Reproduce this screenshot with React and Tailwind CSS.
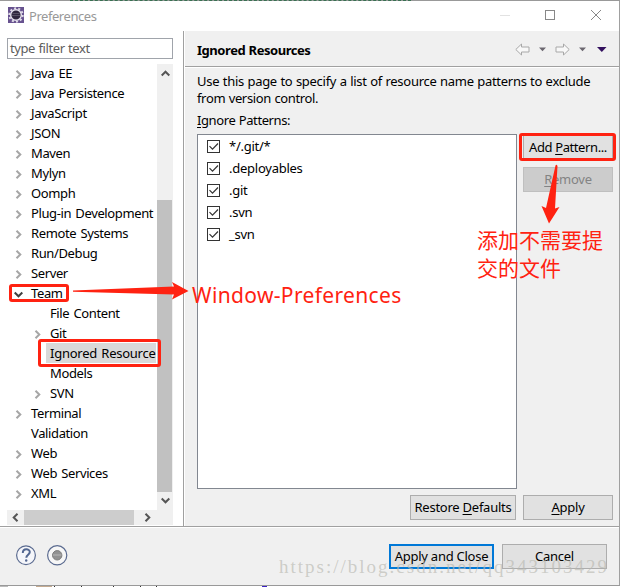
import React from "react";

const treeItems = [
  { label: "Java EE", arrow: true },
  { label: "Java Persistence", arrow: true },
  { label: "JavaScript", arrow: true },
  { label: "JSON", arrow: true },
  { label: "Maven", arrow: true },
  { label: "Mylyn", arrow: true },
  { label: "Oomph", arrow: true },
  { label: "Plug-in Development", arrow: true },
  { label: "Remote Systems", arrow: true },
  { label: "Run/Debug", arrow: true },
  { label: "Server", arrow: true },
  { label: "Team", arrow: true, open: true },
  { label: "File Content", child: true },
  { label: "Git", arrow: true, child: true },
  { label: "Ignored Resource", child: true, selected: true },
  { label: "Models", child: true },
  { label: "SVN", arrow: true, child: true },
  { label: "Terminal", arrow: true },
  { label: "Validation" },
  { label: "Web", arrow: true },
  { label: "Web Services", arrow: true },
  { label: "XML", arrow: true },
];

const patterns = ["*/.git/*", ".deployables", ".git", ".svn", "_svn"];

const rotations = {
  right: "",
  down: "rotate-90",
  left: "rotate-180",
  up: "-rotate-90",
};

function Chevron({ dir = "right", color = "#a6a6a6" }) {
  return (
    <svg width="9" height="9" viewBox="0 0 9 9" className={rotations[dir]}>
      <path d="M2.5 0.7L6.3 4.5L2.5 8.3" fill="none" stroke={color} strokeWidth="2" />
    </svg>
  );
}

function TreeRow({ item }) {
  return (
    <div className={`flex h-5 items-center ${item.child ? "pl-[26px]" : "pl-[7px]"}`}>
      <div className="flex w-[17px] shrink-0 items-center pt-0.5">
        {item.arrow && (
          <Chevron dir={item.open ? "down" : "right"} color={item.open ? "#404040" : "#a6a6a6"} />
        )}
      </div>
      <div
        className={`h-5 leading-5 whitespace-nowrap ${
          item.selected ? "-ml-1 w-[110px] bg-[#d9d9d9] pl-1 tracking-[-0.25px]" : ""
        }`}
      >
        {item.label}
      </div>
    </div>
  );
}

function Button({ className, children }) {
  return (
    <button className={`flex h-[25px] shrink-0 items-center justify-center whitespace-nowrap ${className}`}>
      <span>{children}</span>
    </button>
  );
}

function Key({ children }) {
  return <span className="underline decoration-1 underline-offset-2">{children}</span>;
}

function EclipseIcon() {
  return (
    <svg width="16" height="16" viewBox="0 0 16 16">
      <rect width="16" height="16" fill="#67528f" />
      <circle cx="8" cy="8" r="6.7" fill="none" stroke="#ded9e6" strokeWidth="2" strokeDasharray="2.1 2.1" />
      <circle cx="8" cy="8" r="5.3" fill="#30263e" stroke="#e6e2ed" strokeWidth="1.4" />
      <path d="M4.5 6.5h7M4 8.5h8" stroke="#575064" />
    </svg>
  );
}

function TitleBar() {
  return (
    <div className="flex h-[30px] shrink-0 bg-white pl-2">
      <div className="pt-1.5">
        <EclipseIcon />
      </div>
      <span className="ml-[5px] grow pt-[5px] leading-5 tracking-[-0.45px] text-[#999]">Preferences</span>
      <svg width="106" height="30" viewBox="0 0 106 30" fill="none" className="mr-[13px]">
        <path d="M0 14.5h10" stroke="#e2e2e2" />
        <rect x="45.5" y="9.5" width="9" height="9" stroke="#888" />
        <path d="M91 9l10 10M101 9l-10 10" stroke="#888" />
      </svg>
    </div>
  );
}

function Sidebar() {
  return (
    <div className="flex w-[183px] shrink-0 flex-col bg-white pt-[7px] pl-[7px]">
      <div className="h-[21px] w-[166px] border border-[#a0a4ab] pl-0.5 leading-[19px] tracking-[-0.4px] text-[#5c5c5c]">
        type filter text
      </div>
      <div className="mt-1 flex h-[447px] w-[166px]">
        <div className="w-[150px] tracking-[-0.38px] [word-spacing:1.2px]">
          {treeItems.map((item) => (
            <TreeRow key={item.label} item={item} />
          ))}
        </div>
        <div className="mt-px flex w-4 flex-col items-center bg-[#f0f0f0]">
          <div className="flex h-[136px] items-start pt-[5px]">
            <Chevron dir="up" color="#555" />
          </div>
          <div className="mr-px h-[292px] w-[15px] bg-[#c1c1c1]" />
          <div className="pt-1">
            <Chevron dir="down" color="#555" />
          </div>
        </div>
      </div>
      <div className="flex h-[15px] w-[166px] items-center bg-[#f0f0f0]">
        <div className="flex w-[17px] justify-center">
          <Chevron dir="left" color="#555" />
        </div>
        <div className="h-[15px] w-[110px] bg-[#cdcdcd]" />
        <div className="ml-[9px]">
          <Chevron color="#555" />
        </div>
      </div>
    </div>
  );
}

function PageHeader() {
  return (
    <div className="flex h-[35px] shrink-0 items-center pl-[12px]">
      <span className="grow pt-1 text-[13px] font-bold tracking-[-0.45px]">Ignored Resources</span>
      <svg width="94" height="14" viewBox="0 0 94 14" className="mr-[10px]">
        <g fill="#f8f8f8" stroke="#a8a8a8" strokeLinejoin="round">
          <path d="M.8 7.5L6.5 2v3h7.5v5H6.5v3z" />
          <path d="M54.2 7.5L48.5 2v3H41v5h7.5v3z" />
        </g>
        <path d="M24 5.5h7L27.5 9.3zM64 5.5h7L67.5 9.3z" fill="#6c6870" />
        <path d="M82 5h9.5L86.8 10z" fill="#33105e" />
      </svg>
    </div>
  );
}

function Page() {
  return (
    <div className="flex grow flex-col pt-[5px] pl-[12px]">
      <p className="h-[17px] leading-[17px] tracking-[-0.28px] whitespace-nowrap">
        Use this page to specify a list of resource name patterns to exclude
      </p>
      <p className="h-[17px] leading-[17px] tracking-[-0.35px]">from version control.</p>
      <p className="mt-[5px] h-[22px] leading-[17px] tracking-[-0.4px]">
        <Key>I</Key>gnore Patterns:
      </p>
      <div className="flex gap-[6px]">
        <div className="h-[355px] w-[320px] border border-[#828790] bg-white pt-px pl-[9px]">
          {patterns.map((pattern) => (
            <div key={pattern} className="flex h-[22px] items-center">
              <svg width="13" height="13" viewBox="0 0 13 13" fill="none" className="mr-[9px] mb-px">
                <rect x=".5" y=".5" width="12" height="12" stroke="#333" />
                <path d="M2.5 6.2l3 3 5.5-5.7" stroke="#333" strokeWidth="1.2" />
              </svg>
              <span>{pattern}</span>
            </div>
          ))}
        </div>
        <div className="flex flex-col gap-[7px] pt-px">
          <Button className="w-[90px] border border-[#adadad] bg-[#e1e1e1] tracking-[-0.4px]">
            Add <Key>P</Key>attern...
          </Button>
          <Button className="w-[90px] border border-[#bfbfbf] bg-[#ccc] text-[#838383]">
            <Key>R</Key>emove
          </Button>
        </div>
      </div>
      <div className="mt-[6px] flex gap-[7px] pl-[213px]">
        <Button className="w-[106px] border border-[#adadad] bg-[#e1e1e1]">
          Restore <Key>D</Key>efaults
        </Button>
        <Button className="w-[90px] border border-[#adadad] bg-[#e1e1e1]">
          <Key>A</Key>pply
        </Button>
      </div>
    </div>
  );
}

function Footer() {
  return (
    <div className="flex h-[58px] shrink-0 items-start border-t border-white pt-4 pl-4">
      <svg width="52" height="22" viewBox="0 0 52 22" fill="none" className="mt-px">
        <circle cx="10" cy="10.3" r="9.4" fill="#f5f6fa" stroke="#5b6b90" strokeWidth="1.2" />
        <path d="M6.8 8c0-5 7-4.6 7-.9 0 2.6-3.5 2.7-3.5 5.6" stroke="#536791" strokeWidth="2" />
        <circle cx="10.2" cy="15.5" r="1.2" fill="#536791" />
        <circle cx="41.2" cy="10.3" r="9.6" fill="#f7f7f7" stroke="#5b6b90" strokeWidth="1.2" />
        <circle cx="41.2" cy="10.3" r="4.7" fill="#929292" stroke="#7d7d7d" />
        <path d="M37 10h8.4" stroke="#a5a5a5" strokeWidth="2" />
      </svg>
      <Button className="ml-[321px] w-[105px] border-2 border-[#0078d7] bg-[#e1e1e1]">Apply and Close</Button>
      <Button className="ml-2 w-[105px] border border-[#adadad] bg-[#e1e1e1]">Cancel</Button>
    </div>
  );
}

// Red marks and the watermark drawn over the dialog
function Annotations() {
  return (
    <div className="pointer-events-none absolute inset-0 tracking-normal text-[#ff2211]">
      <svg width="620" height="587" viewBox="0 0 620 587" className="absolute inset-0" fill="none">
        <g stroke="#ff2211" strokeWidth="3">
          <rect x="10.5" y="285.5" width="57" height="15" rx="1.5" />
          <rect x="39.5" y="340.5" width="120" height="25" rx="1.5" />
          <rect x="520.5" y="134.5" width="94" height="25" rx="1.5" />
        </g>
        <g fill="#ff2211">
          <path d="M73 290.5L174 286.5L172 282L188.5 291L172 299.5L174 294.5L73 291.7z" />
          <path d="M555.5 165.5Q556.5 164 557.5 166L555 208.5L559.5 207L549 223.5L541.5 206L546 208z" />
        </g>
      </svg>
      <p className="absolute top-[281px] left-[192px] text-[21px] leading-7 tracking-[0.35px] whitespace-nowrap">
        Window-Preferences
      </p>
      <p className="absolute top-[225px] left-[477px] w-[130px] font-['Noto_Sans_CJK_SC',sans-serif] text-[21px] leading-7">
        添加不需要提
        <br />
        交的文件
      </p>
      <p className="absolute top-[556px] left-[279px] font-['Liberation_Serif',serif] text-[19px] leading-[22px] tracking-[2px] whitespace-nowrap text-[#b8b8b0]/65">
        https://blog.csdn.net/qq343103429
      </p>
    </div>
  );
}

export default function App() {
  return (
    <div className="relative flex h-[587px] w-[620px] flex-col overflow-hidden bg-[#f0f0f0] font-['Noto_Sans',sans-serif] text-[13px] tracking-[-0.25px] text-black [word-spacing:0.4px]">
      <div className="flex h-px shrink-0 bg-[#999]">
        <div className="ml-[70px] w-[341px] border-t border-dashed border-[#397052]" />
      </div>
      <div className="flex h-[584px] shrink-0 flex-col border-r border-[#a0a0a0]">
        <TitleBar />
        <div className="flex h-[496px] shrink-0 border-b border-[#a0a0a0]">
          <Sidebar />
          <div className="flex grow flex-col border-l border-[#a0a0a0]">
            <div className="flex grow flex-col border-l border-white">
              <PageHeader />
              <div className="h-0.5 shrink-0 border-t border-b border-t-[#a0a0a0] border-b-white" />
              <Page />
            </div>
          </div>
        </div>
        <Footer />
      </div>
      <div className="h-px shrink-0 bg-[#999]" />
      {/* Sliver of the window behind the dialog */}
      <div className="flex h-px shrink-0 bg-white">
        <div className="w-2 bg-[#bbb]" />
        <div className="ml-[28px] w-4 bg-[#c5ab91]" />
        <div className="ml-[2px] w-px bg-[#333]" />
        <div className="ml-[26px] w-px bg-[#333]" />
        <div className="ml-[31px] w-px bg-[#333]" />
        <div className="ml-[26px] w-px bg-[#333]" />
        <div className="ml-[15px] w-px bg-[#333]" />
        <div className="ml-[105px] w-[5px] bg-[#3b22c5]" />
      </div>
      <Annotations />
    </div>
  );
}
